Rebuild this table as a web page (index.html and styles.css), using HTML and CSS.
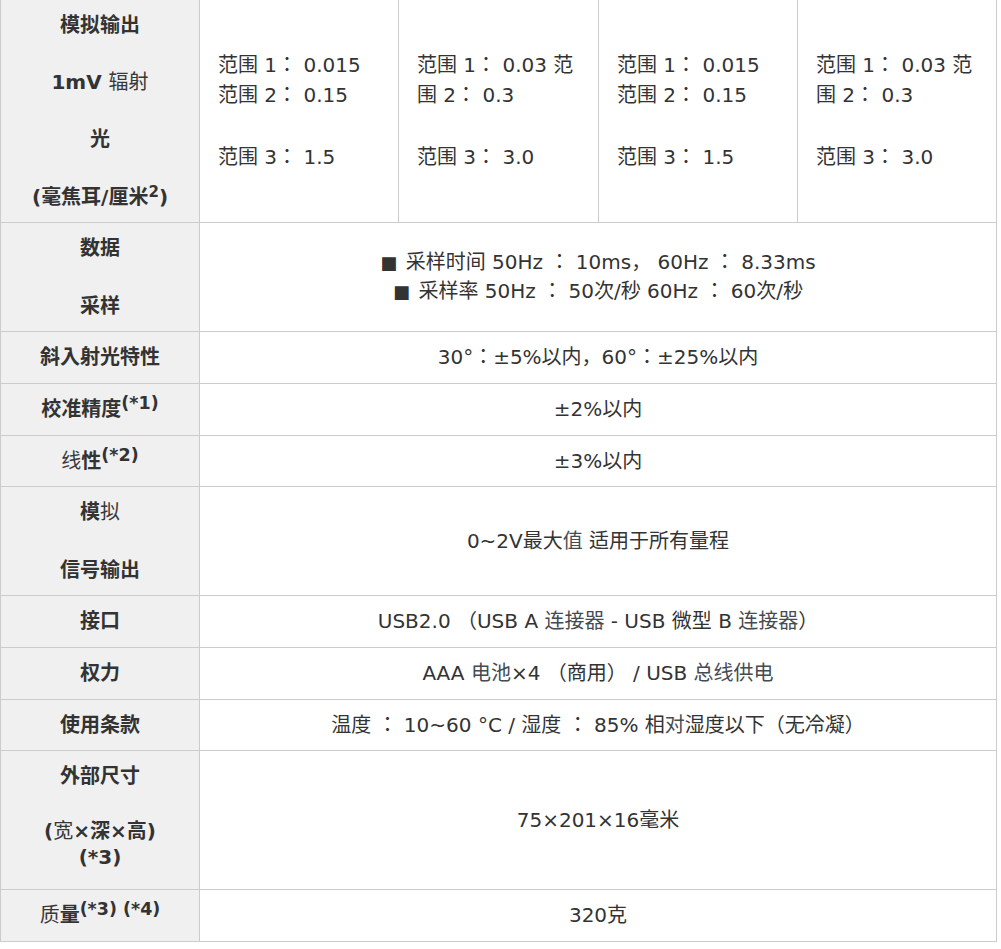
FILE: index.html
```html
<!DOCTYPE html>
<html lang="zh-CN">
<head>
<meta charset="utf-8">
<title>规格</title>
<link rel="stylesheet" href="styles.css">
</head>
<body>
<table class="spec">
  <colgroup>
    <col class="c-head">
    <col class="c-a">
    <col class="c-b">
    <col class="c-a">
    <col class="c-a">
  </colgroup>
  <tbody>
    <tr class="r-top">
      <th>
        <div class="hl">模拟输出</div>
        <div class="hl">1mV <span class="alt">辐射</span></div>
        <div class="hl">光</div>
        <div class="hl">(毫焦耳/厘米<sup class="sq2">2</sup>)</div>
      </th>
      <td class="range">范围 1： 0.015 范围 2： 0.15<br><br>范围 3： 1.5</td>
      <td class="range">范围 1： 0.03 范围 2： 0.3<br><br>范围 3： 3.0</td>
      <td class="range">范围 1： 0.015 范围 2： 0.15<br><br>范围 3： 1.5</td>
      <td class="range">范围 1： 0.03 范围 2： 0.3<br><br>范围 3： 3.0</td>
    </tr>
    <tr>
      <th>
        <div class="hl">数据</div>
        <div class="hl">采样</div>
      </th>
      <td colspan="4" class="tight"><span class="sq">■</span> 采样时间 50Hz ： 10ms， 60Hz ： 8.33ms<br><span class="sq">■</span> 采样率 50Hz ： 50次/秒 60Hz ： 60次/秒</td>
    </tr>
    <tr>
      <th>斜入射光特性</th>
      <td colspan="4">30°：±5%以内，60°：±25%以内</td>
    </tr>
    <tr>
      <th class="has-sup">校准精度<sup>(*1)</sup></th>
      <td colspan="4">±2%以内</td>
    </tr>
    <tr>
      <th class="has-sup"><span class="alt">线</span>性<sup>(*2)</sup></th>
      <td colspan="4">±3%以内</td>
    </tr>
    <tr>
      <th>
        <div class="hl">模<span class="alt">拟</span></div>
        <div class="hl">信号输出</div>
      </th>
      <td colspan="4">0~2V最大<span class="alt">值</span> 适用于所有量程</td>
    </tr>
    <tr>
      <th>接口</th>
      <td colspan="4">USB2.0 （USB A <span class="alt">连接器</span> - USB 微型 B <span class="alt">连接器</span>）</td>
    </tr>
    <tr>
      <th>权力</th>
      <td colspan="4">AAA <span class="alt">电池</span>×4 （商用） / USB <span class="alt">总线供电</span></td>
    </tr>
    <tr>
      <th>使用条款</th>
      <td colspan="4">温度 ： 10~60 °C / 湿度 ： 85% 相<span class="alt">对</span>湿度以下（无冷凝）</td>
    </tr>
    <tr>
      <th>
        <div class="hl">外部尺寸</div>
        <div class="hl dims">(<span class="alt">宽</span>×深×高)<br>(*3)</div>
      </th>
      <td colspan="4">75×201×16毫米</td>
    </tr>
    <tr>
      <th class="has-sup"><span class="alt">质</span>量<sup>(*3) (*4)</sup></th>
      <td colspan="4">320克</td>
    </tr>
  </tbody>
</table>
</body>
</html>
```

FILE: styles.css
```css
html, body {
  margin: 0;
  padding: 0;
  background: #ffffff;
}

body {
  font-family: "DejaVu Sans", "Noto Sans CJK JP", sans-serif;
  font-size: 20px;
  color: #333333;
  font-feature-settings: "locl" 0;
}

.spec {
  border-collapse: collapse;
  table-layout: fixed;
  width: 997px;
  margin-top: -1px;
}

.c-head { width: 199px; }
.c-a { width: 199px; }
.c-b { width: 200px; }

.spec th,
.spec td {
  border: 1px solid #cccccc;
  padding: 10px 20px;
  line-height: 30.7px;
  vertical-align: middle;
  font-size: 20px;
}

.spec th {
  background: #f0f0f0;
  font-weight: bold;
  text-align: center;
  color: #333333;
}

.spec td {
  text-align: center;
  font-weight: normal;
}

.spec td.range {
  text-align: left;
  padding-left: 18px;
}

.spec td.tight {
  line-height: 29px;
}

.hl + .hl {
  margin-top: 26.5px;
}

.hl.dims {
  line-height: 26px;
  margin-top: 26px;
  margin-bottom: 9.3px;
}

sup {
  font-size: 17.5px;
  line-height: 0;
  vertical-align: 7px;
}

sup.sq2 {
  font-size: 15px;
}

.has-sup {
  padding-bottom: 14px;
  padding-top: 6px;
}

.alt {
  font-weight: normal;
  color: #444b53;
}

.spec th .alt {
  color: #383838;
}

.sq {
  font-size: 18px;
  margin-right: 2px;
}
```
